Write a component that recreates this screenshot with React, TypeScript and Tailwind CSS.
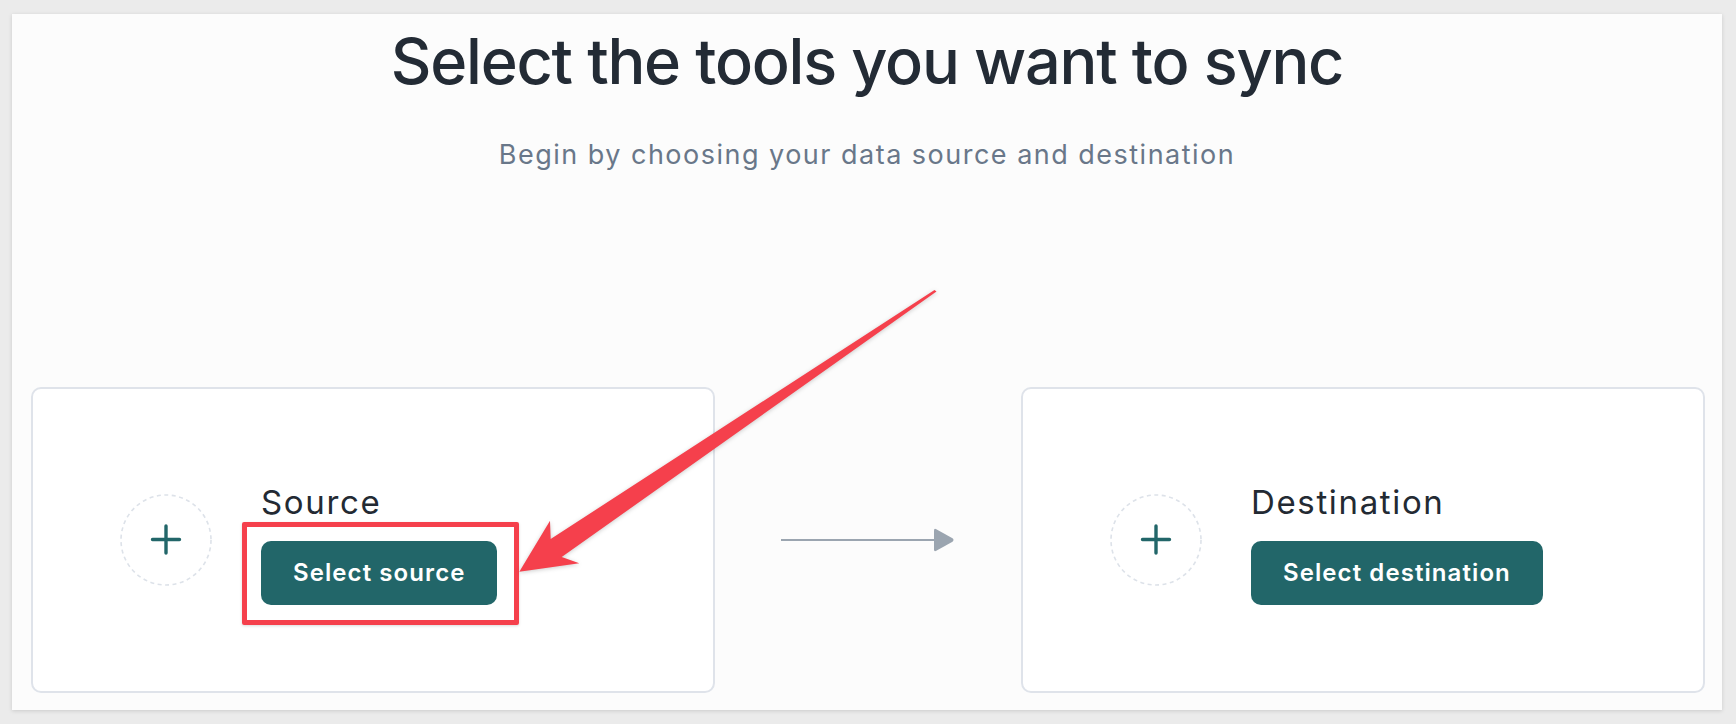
import { Fragment } from "react";

const teal = "bg-[#226669]";

function DashedPlus() {
  return (
    <svg width="92" height="92" viewBox="0 0 92 92" className="shrink-0">
      <circle cx="46" cy="46" r="45" fill="none" stroke="#dde2e9" strokeWidth="1.6" strokeDasharray="4 3.5" />
      <path d="M46 32v27M32.5 45.5h27" stroke="#226669" strokeWidth="3.4" strokeLinecap="round" />
    </svg>
  );
}

function ToolCard({ label, action, highlight }: { label: string; action: string; highlight?: boolean }) {
  return (
    <div className="w-[684px] h-[306px] bg-white border-2 border-[#dfe3ea] rounded-[10px] flex items-center pl-[87px]">
      <DashedPlus />
      <div className="ml-[49px] mt-[7px] flex flex-col items-start">
        <span className="text-[33px] leading-[40px] tracking-[0.05em] text-[#232a33]">{label}</span>
        <div className="relative mt-[19px]">
          {highlight && (
            <div className="absolute -left-[19px] -top-[19px] w-[277px] h-[103px] border-[5px] border-[#f5404c] rounded-[2px] shadow-[0_1px_3px_rgba(0,0,0,0.15)]" />
          )}
          <button
            className={`${teal} h-[64px] px-8 rounded-[10px] text-white text-[24px] font-semibold tracking-[0.045em]`}
          >
            {action}
          </button>
        </div>
      </div>
    </div>
  );
}

export default function App() {
  return (
    <div
      className="min-h-screen bg-[#ebebeb] pl-[12px] pt-[14px]"
      style={{ fontFamily: "Inter, 'Noto Sans', sans-serif" }}
    >
      <div className="relative w-[1710px] h-[696px] bg-[#fcfcfc] shadow-[0_1px_4px_rgba(0,0,0,0.14)] flex flex-col">
        <h1 className="mt-[16px] text-center text-[63px] leading-none font-medium tracking-[-0.02em] text-[#232b35]">
          Select the tools you want to sync
        </h1>
        <p className="mt-[48px] text-center text-[27px] leading-none tracking-[0.055em] text-[#697789]">
          Begin by choosing your data source and destination
        </p>

        <div className="mt-auto mb-[17px] pl-[19px] pr-[17px] flex items-center">
          <ToolCard label="Source" action="Select source" highlight />
          <div className="w-[306px] flex justify-center">
            <svg width="174" height="26" viewBox="0 0 174 26">
              <line x1="0" y1="13" x2="156" y2="13" stroke="#9ba5b0" strokeWidth="2" />
              <path d="M153 3.5 Q153 1 155.3 2.2 L171.5 11.3 Q173.5 13 171.5 14.7 L155.3 23.8 Q153 25 153 22.5 Z" fill="#9ba5b0" />
            </svg>
          </div>
          <ToolCard label="Destination" action="Select destination" />
        </div>

        {/* annotation arrow drawn over the page */}
        <svg
          className="absolute inset-0 pointer-events-none drop-shadow-[0_1px_2px_rgba(0,0,0,0.2)]"
          width="1710"
          height="696"
          viewBox="0 0 1710 696"
        >
          <polygon
            points="922.5,276 924.5,277.5 549.7,543 567.3,549.3 507.3,557.7 538,506.7 538.7,525"
            fill="#f5404c"
          />
        </svg>
      </div>
    </div>
  );
}
